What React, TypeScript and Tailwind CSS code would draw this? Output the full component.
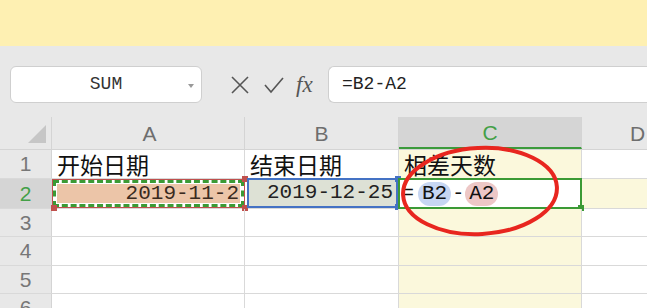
import React from "react";

const mono = { fontFamily: '"Liberation Mono", "DejaVu Sans Mono", monospace' };
const cjk = { fontFamily: '"Noto Sans CJK SC", "Noto Sans", sans-serif' };
const sans = { fontFamily: '"Liberation Sans", Arial, sans-serif' };

const W = ["w-[52px]", "w-[193px]", "w-[154px]", "w-[183px]", "flex-1"];

function Corner({ c, pos }: { c: string; pos: string }) {
  return <span className={`absolute w-[6px] h-[6px] ${c} ${pos}`} />;
}

export default function App() {
  const rows = [
    { n: "1", h: "h-[29px]" },
    { n: "2", h: "h-[30px]" },
    { n: "3", h: "h-[28px]" },
    { n: "4", h: "h-[29px]" },
    { n: "5", h: "h-[28px]" },
    { n: "6", h: "h-[28px]" },
  ];
  return (
    <div className="relative w-[647px] h-[308px] overflow-hidden bg-[#e8e8e8]">
      <div className="h-[46px] bg-[#fef0b2]" />
      {/* toolbar */}
      <div className="h-[71px] pt-[20px] flex items-start">
        <div className="ml-[10px] w-[192px] h-[37px] bg-white border border-[#cfcfcf] rounded-[6px] flex items-center relative">
          <span className="flex-1 text-center text-[18px] text-[#333]" style={mono}>SUM</span>
          <span className="absolute right-[7px] top-[17px] w-0 h-0 border-l-[3px] border-r-[3px] border-t-[4px] border-l-transparent border-r-transparent border-t-[#999]" />
        </div>
        <div className="w-[126px] h-[37px] flex items-center">
          <svg width="20" height="20" viewBox="0 0 20 20" className="ml-[28px]">
            <path d="M2 2 L18 18 M18 2 L2 18" stroke="#555" strokeWidth="1.6" fill="none" />
          </svg>
          <svg width="22" height="20" viewBox="0 0 22 20" className="ml-[13px]">
            <path d="M2 10 L8 17 L20 3" stroke="#555" strokeWidth="1.6" fill="none" />
          </svg>
          <span className="ml-[11px] text-[23px] italic text-[#555] leading-none" style={{ fontFamily: '"Liberation Serif", serif' }}>fx</span>
        </div>
        <div className="flex-1 h-[37px] bg-white border border-[#cfcfcf] rounded-l-[6px] border-r-0 flex items-center pl-[13px]">
          <span className="text-[18px] text-[#222]" style={mono}>=B2-A2</span>
        </div>
      </div>
      {/* header row */}
      <div className="flex h-[33px] border-b border-[#d4d4d4]">
        <div className={`${W[0]} relative border-r border-[#d4d4d4]`}>
          <svg width="18" height="18" viewBox="0 0 18 18" className="absolute left-[28px] top-[8px]">
            <polygon points="18,0 18,18 0,18" fill="#c6c6c6" />
          </svg>
        </div>
        <div className={`${W[1]} border-r border-[#d4d4d4] flex items-center justify-center text-[21px] text-[#6e6e6e] pt-[2px] pl-[3px]`} style={sans}>A</div>
        <div className={`${W[2]} border-r border-[#d4d4d4] flex items-center justify-center text-[21px] text-[#6e6e6e] pt-[2px]`} style={sans}>B</div>
        <div className={`${W[3]} bg-[#d5d5d5] border-r border-[#d4d4d4] border-b-2 border-b-[#3c9b3c] flex items-center justify-center text-[21px] text-[#43a047] pt-[2px]`} style={sans}>C</div>
        <div className={`${W[4]} flex items-center justify-start pl-[48px] text-[21px] text-[#6e6e6e] pt-[2px]`} style={sans}>D</div>
      </div>
      {/* body rows */}
      {rows.map((r) => {
        const sel = r.n === "2";
        return (
          <div key={r.n} className={`flex ${r.h} border-b border-[#d9d9d9] bg-white`}>
            <div
              className={`${W[0]} border-r border-[#d4d4d4] flex items-center justify-center text-[21px] ${sel ? "bg-[#d5d5d5] text-[#43a047]" : "bg-[#e8e8e8] text-[#777]"}`}
              style={sans}
            >
              {r.n}
            </div>
            {/* A */}
            <div className={`${W[1]} border-r border-[#d9d9d9] relative flex items-end`}>
              {r.n === "1" && (
                <span className="pl-[5px] text-[23px] leading-[28px] text-[#111]" style={cjk}>开始日期</span>
              )}
              {sel && (
                <div className="absolute inset-0 -right-[1px] border border-[#c0504d]">
                  <div className="absolute inset-0 bg-white border-[3px] border-dashed border-[#3b9a35]">
                    <div className="absolute inset-[1px] bg-[#ecc5a8] flex items-center justify-end pr-[1px]">
                      <span className="text-[21px] text-[#3a2a20]" style={mono}>2019-11-2</span>
                    </div>
                  </div>
                  <Corner c="bg-[#c0504d]" pos="-right-[4px] -top-[4px]" />
                  <Corner c="bg-[#c0504d]" pos="-right-[4px] -bottom-[4px]" />
                  <Corner c="bg-[#c0504d] w-[3px]" pos="-left-[2px] -bottom-[4px]" />
                </div>
              )}
            </div>
            {/* B */}
            <div className={`${W[2]} border-r border-[#d9d9d9] relative flex items-end`}>
              {r.n === "1" && (
                <span className="pl-[5px] text-[23px] leading-[28px] text-[#111]" style={cjk}>结束日期</span>
              )}
              {sel && (
                <div className="absolute left-[2px] right-0 -top-[1px] bottom-0 border-2 border-[#4472c4] bg-[#dde1d5] flex items-center justify-end pr-[3px]">
                  <span className="text-[21px] text-[#222]" style={mono}>2019-12-25</span>
                  <Corner c="bg-[#4472c4]" pos="-right-[5px] -top-[4px]" />
                  <Corner c="bg-[#4472c4]" pos="-right-[5px] -bottom-[4px]" />
                </div>
              )}
            </div>
            {/* C */}
            <div className={`${W[3]} border-r border-[#d9d9d9] relative flex items-end ${sel ? "bg-white" : "bg-[#fbf8dc]"}`}>
              {r.n === "1" && (
                <span className="pl-[5px] text-[23px] leading-[28px] text-[#111]" style={cjk}>相差天数</span>
              )}
              {sel && (
                <div className="absolute -left-[1px] -right-[1px] -top-[1px] bottom-[-1px] border-2 border-[#3b9a35] flex items-center pl-[2px]">
                  <span className="text-[20px] text-[#111]" style={mono}>=</span>
                  <span className="ml-[4px] px-[4px] rounded-[12px] bg-[#c7d6f2] text-[21px] text-[#111] leading-[24px]" style={mono}>B2</span>
                  <span className="mx-[1px] text-[20px] text-[#111]" style={mono}>-</span>
                  <span className="px-[4px] rounded-[12px] bg-[#edc7c6] text-[21px] text-[#111] leading-[24px]" style={mono}>A2</span>
                  <Corner c="bg-[#3b9a35]" pos="-right-[4px] -bottom-[4px]" />
                </div>
              )}
            </div>
            {/* D */}
            <div className={`${W[4]} ${sel ? "bg-[#fbf8dc]" : "bg-white"}`} />
          </div>
        );
      })}
      {/* red ellipse annotation */}
      <svg className="absolute left-0 top-0 pointer-events-none" width="647" height="308">
        <ellipse cx="480" cy="191" rx="77" ry="43" fill="none" stroke="#e8261f" strokeWidth="4" transform="rotate(-3 480 191)" />
      </svg>
    </div>
  );
}
